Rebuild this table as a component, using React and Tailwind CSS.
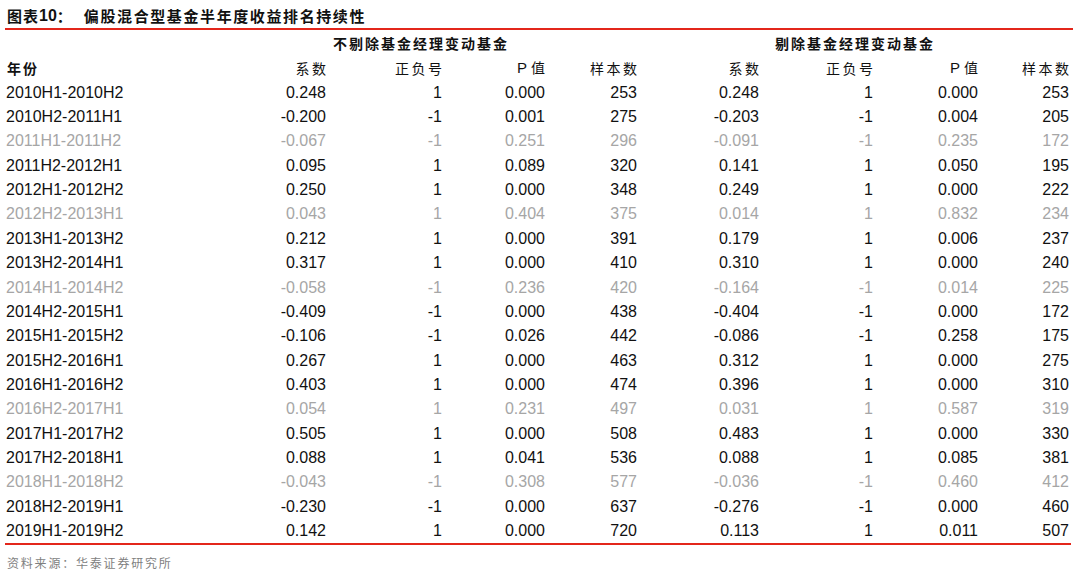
import React from "react";

const rows = [
  ["2010H1-2010H2", "0.248", "1", "0.000", "253", "0.248", "1", "0.000", "253", false],
  ["2010H2-2011H1", "-0.200", "-1", "0.001", "275", "-0.203", "-1", "0.004", "205", false],
  ["2011H1-2011H2", "-0.067", "-1", "0.251", "296", "-0.091", "-1", "0.235", "172", true],
  ["2011H2-2012H1", "0.095", "1", "0.089", "320", "0.141", "1", "0.050", "195", false],
  ["2012H1-2012H2", "0.250", "1", "0.000", "348", "0.249", "1", "0.000", "222", false],
  ["2012H2-2013H1", "0.043", "1", "0.404", "375", "0.014", "1", "0.832", "234", true],
  ["2013H1-2013H2", "0.212", "1", "0.000", "391", "0.179", "1", "0.006", "237", false],
  ["2013H2-2014H1", "0.317", "1", "0.000", "410", "0.310", "1", "0.000", "240", false],
  ["2014H1-2014H2", "-0.058", "-1", "0.236", "420", "-0.164", "-1", "0.014", "225", true],
  ["2014H2-2015H1", "-0.409", "-1", "0.000", "438", "-0.404", "-1", "0.000", "172", false],
  ["2015H1-2015H2", "-0.106", "-1", "0.026", "442", "-0.086", "-1", "0.258", "175", false],
  ["2015H2-2016H1", "0.267", "1", "0.000", "463", "0.312", "1", "0.000", "275", false],
  ["2016H1-2016H2", "0.403", "1", "0.000", "474", "0.396", "1", "0.000", "310", false],
  ["2016H2-2017H1", "0.054", "1", "0.231", "497", "0.031", "1", "0.587", "319", true],
  ["2017H1-2017H2", "0.505", "1", "0.000", "508", "0.483", "1", "0.000", "330", false],
  ["2017H2-2018H1", "0.088", "1", "0.041", "536", "0.088", "1", "0.085", "381", false],
  ["2018H1-2018H2", "-0.043", "-1", "0.308", "577", "-0.036", "-1", "0.460", "412", true],
  ["2018H2-2019H1", "-0.230", "-1", "0.000", "637", "-0.276", "-1", "0.000", "460", false],
  ["2019H1-2019H2", "0.142", "1", "0.000", "720", "0.113", "1", "0.011", "507", false],
];

const subHeads = ["系数", "正负号", "P", "样本数", "系数", "正负号", "P", "样本数"];

export default function App() {
  return (
    <div className="w-[1080px] h-[576px] bg-white overflow-hidden font-['Noto_Sans_CJK_SC','Noto_Sans',sans-serif]">
      <div className="ml-[5px] w-[1068px]">
        {/* Title */}
        <div className="h-[28px] pt-[4px] flex items-center pl-[2px] text-[15px] font-bold text-[#111]">
          <span className="tracking-[1px]">图表</span>
          <span className="font-['Liberation_Sans',Arial,sans-serif] text-[16px]">10</span>
          <span>：</span>
          <span className="ml-[12px] tracking-[1.6px]">偏股混合型基金半年度收益排名持续性</span>
        </div>
        <div className="h-[1.6px] bg-[#e3261b]" />

        <div className="grid grid-cols-[200px_121px_116px_103px_92px_122px_114px_105px_95px] text-[#111]">
          {/* Header row 1 */}
          <div className="h-[27px]" />
          <div className="col-span-4 h-[27px] flex items-center justify-center text-[14px] font-bold tracking-[2px]">
            不剔除基金经理变动基金
          </div>
          <div className="col-span-4 h-[27px] flex items-center justify-center text-[14px] font-bold tracking-[2px]">
            剔除基金经理变动基金
          </div>

          {/* Header row 2 */}
          <div className="h-[24px] flex items-center pl-[2px] text-[14px] font-bold tracking-[2px]">
            年份
          </div>
          {subHeads.map((h, i) => (
            <div
              key={i}
              className={
                i === 7
                  ? "h-[24px] flex items-center justify-end text-[14px] pr-[4px]"
                  : "h-[24px] flex items-center justify-end text-[14px]"
              }
            >
              {h === "P" ? (
                <span className="font-['Liberation_Sans',Arial,sans-serif] text-[15px]">
                  P
                  <span className="ml-[4px] text-[14px] font-['Noto_Sans_CJK_SC',sans-serif]">值</span>
                </span>
              ) : (
                <span className="tracking-[2.5px] mr-[-2.5px]">{h}</span>
              )}
            </div>
          ))}

          {/* Data rows */}
          {rows.map((r) => {
            const grey = r[9];
            return (
              <React.Fragment key={r[0]}>
                <div
                  className={
                    grey
                      ? "h-[24.35px] flex items-center pl-[1px] text-[16px] font-['Liberation_Sans',Arial,sans-serif] text-[#a6a6a6]"
                      : "h-[24.35px] flex items-center pl-[1px] text-[16px] font-['Liberation_Sans',Arial,sans-serif] text-[#111]"
                  }
                >
                  {r[0]}
                </div>
                {r.slice(1, 9).map((v, i) => (
                  <div
                    key={i}
                    className={
                      (grey
                        ? "h-[24.35px] flex items-center justify-end text-[16px] font-['Liberation_Sans',Arial,sans-serif] text-[#a6a6a6]"
                        : "h-[24.35px] flex items-center justify-end text-[16px] font-['Liberation_Sans',Arial,sans-serif] text-[#111]") +
                      (i === 7 ? " pr-[4px]" : "")
                    }
                  >
                    {v}
                  </div>
                ))}
              </React.Fragment>
            );
          })}
        </div>
        <div className="w-[1066px] h-[1.6px] bg-[#e3261b]" />

        {/* Footer */}
        <div className="h-[36px] flex items-center pl-[2px] text-[12px] text-[#7f7f7f] tracking-[1.8px]">
          资料来源：华泰证券研究所
        </div>
      </div>
    </div>
  );
}
